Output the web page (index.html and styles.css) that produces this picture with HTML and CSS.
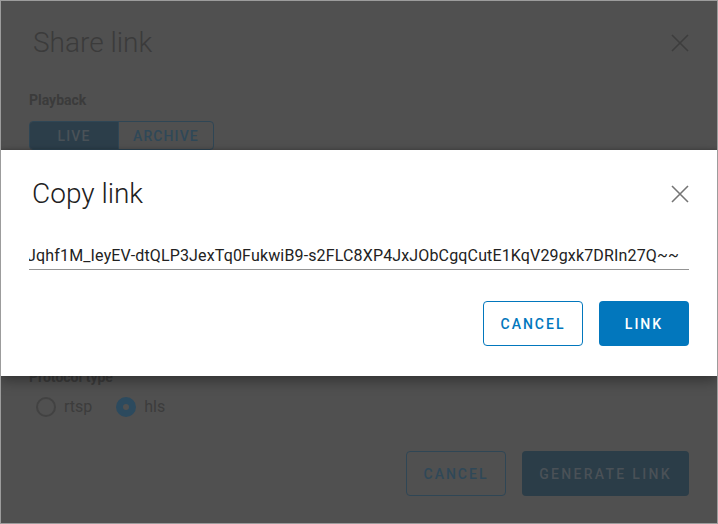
FILE: index.html
```html
<!DOCTYPE html>
<html lang="en">
<head>
<meta charset="utf-8">
<title>Copy link</title>
<link rel="stylesheet" href="styles.css">
</head>
<body>
<div class="frame">
  <section class="share">
    <header class="share-head">
      <h1 class="share-title">Share link</h1>
      <svg class="close close-dim" width="18" height="18" viewBox="0 0 18 18" aria-hidden="true"><path d="M1 1 L17 17 M17 1 L1 17"/></svg>
    </header>
    <div class="label label-playback">Playback</div>
    <div class="toggle">
      <span class="seg seg-on">Live</span>
      <span class="seg">Archive</span>
    </div>
    <div class="label label-protocol">Protocol type</div>
    <div class="radios">
      <span class="radio"><span class="circle"></span><span class="rlabel">rtsp</span></span>
      <span class="radio"><span class="circle circle-on"></span><span class="rlabel">hls</span></span>
    </div>
    <div class="actions share-actions">
      <span class="btn btn-outline-dim">Cancel</span>
      <span class="btn btn-fill-dim">Generate link</span>
    </div>
  </section>

  <section class="copy">
    <header class="copy-head">
      <h2 class="copy-title">Copy link</h2>
      <svg class="close" width="18" height="18" viewBox="0 0 18 18" aria-hidden="true"><path d="M1 1 L17 17 M17 1 L1 17"/></svg>
    </header>
    <div class="field"><span class="field-text">eyJ0eXAiOiJKV1QiLCJhbGciOiJIUzI1NiJ9.Jqhf1M_IeyEV-dtQLP3JexTq0FukwiB9-s2FLC8XP4JxJObCgqCutE1KqV29gxk7DRIn27Q~~</span></div>
    <div class="actions copy-actions">
      <span class="btn btn-outline">Cancel</span>
      <span class="btn btn-fill">Link</span>
    </div>
  </section>
</div>
</body>
</html>
```
FILE: styles.css
```css
html, body {
  margin: 0;
  padding: 0;
  background: #505050;
}

.frame {
  width: 718px;
  height: 524px;
  box-sizing: border-box;
  border: 1px solid #9c9c9c;
  background: #505050;
  position: relative;
  overflow: hidden;
  font-family: Roboto, "Liberation Sans", sans-serif;
}

/* ---- background dialog (dimmed) ---- */
.share {
  height: 100%;
  box-sizing: border-box;
  padding: 26px 28px 27px 28px;
  display: flex;
  flex-direction: column;
}

.share-head,
.copy-head {
  display: flex;
  justify-content: space-between;
  align-items: center;
}

.share-title,
.copy-title {
  margin: 0 0 0 3px;
  font-size: 28px;
  font-weight: 300;
  line-height: 32px;
}

.share-title {
  color: #3b3b3b;
  margin-left: 4px;
}

.close {
  display: block;
}
.close path {
  stroke: #757575;
  stroke-width: 1.6;
  fill: none;
}
.close-dim path { stroke: #3d3d3d; }

.label {
  font-size: 14px;
  font-weight: 700;
  line-height: 20px;
  color: #3b3b3b;
}
.label-playback { margin-top: 31px; }

.toggle {
  margin-top: 11px;
  display: flex;
  align-self: flex-start;
  height: 29px;
  box-sizing: border-box;
  border: 1px solid #2f4655;
  border-radius: 4px;
  overflow: hidden;
}
.seg {
  padding: 0 14px;
  display: flex;
  align-items: center;
  justify-content: center;
  font-size: 14px;
  font-weight: 500;
  letter-spacing: 1.1px;
  text-transform: uppercase;
  color: #2f4858;
}
.seg-on {
  width: 89px;
  box-sizing: border-box;
  background: #2c3e4a;
  color: #4a5258;
  border-right: 1px solid #2f4655;
}

.label-protocol { margin-top: 217px; }

.radios {
  margin-top: 10px;
  margin-left: 7px;
  display: flex;
  gap: 24px;
}
.radio {
  display: flex;
  align-items: center;
  gap: 8px;
}
.circle {
  width: 20px;
  height: 20px;
  box-sizing: border-box;
  border: 2px solid #424242;
  border-radius: 50%;
}
.circle-on {
  border: 7px solid #2c4a5e;
  background: #505050;
}
.rlabel {
  font-size: 16px;
  line-height: 20px;
  color: #3c3c3c;
}

.actions {
  display: flex;
  justify-content: flex-end;
  gap: 16px;
}
.share-actions { margin-top: auto; }

.btn {
  height: 45px;
  padding: 0 17px;
  box-sizing: border-box;
  border-radius: 4px;
  display: flex;
  align-items: center;
  justify-content: center;
  font-size: 14px;
  font-weight: 500;
  letter-spacing: 2px;
  text-transform: uppercase;
}
.btn-outline-dim {
  width: 100px;
  border: 1px solid #2f4655;
  color: #2f4858;
}
.btn-fill-dim {
  width: 167px;
  padding: 0;
  background: #2b3d48;
  color: #4a5157;
  letter-spacing: 2.3px;
}

/* ---- foreground dialog ---- */
.copy {
  position: absolute;
  top: 149px;
  left: 0;
  right: 0;
  height: 226px;
  box-sizing: border-box;
  padding: 28px 28px 30px 28px;
  background: #ffffff;
  box-shadow: 0 5px 12px rgba(0, 0, 0, 0.35), 0 -1px 3px rgba(0, 0, 0, 0.15);
}

.copy-title { color: #212121; }

.field {
  margin-top: 36px;
  display: flex;
  justify-content: flex-end;
  overflow: hidden;
  white-space: nowrap;
  padding: 0 10px 3px 0;
  border-bottom: 1px solid #949494;
  font-size: 16px;
  line-height: 20px;
  letter-spacing: 0.15px;
  color: #222222;
}
.field-text { flex: none; }

.copy-actions { margin-top: 31px; }

.btn-outline {
  width: 100px;
  border: 1px solid #0277bd;
  color: #0277bd;
}
.btn-fill {
  width: 90px;
  background: #0277bd;
  color: #ffffff;
}
```
